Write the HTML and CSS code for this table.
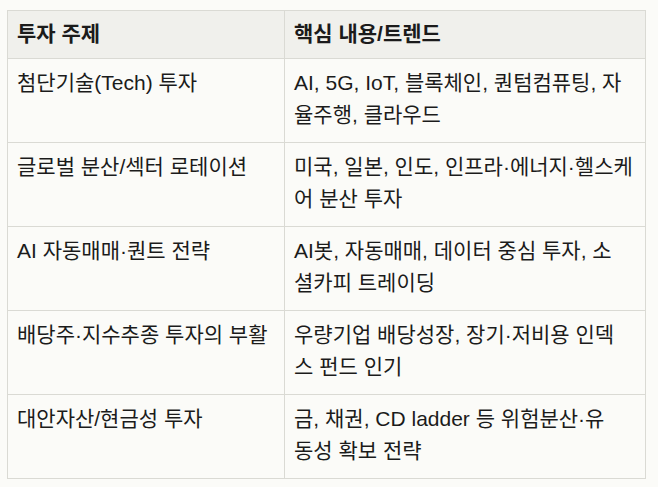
FILE: index.html
```html
<!DOCTYPE html>
<html lang="ko">
<head>
<meta charset="utf-8">
<link rel="stylesheet" href="styles.css">
</head>
<body>
<div class="wrap">
<table class="grid">
  <thead>
    <tr><th class="c1">투자 주제</th><th class="c2">핵심 내용/트렌드</th></tr>
  </thead>
  <tbody>
    <tr><td>첨단기술(Tech) 투자</td><td>AI, 5G, IoT, 블록체인, 퀀텀컴퓨팅, 자<br>율주행, 클라우드</td></tr>
    <tr><td>글로벌 분산/섹터 로테이션</td><td>미국, 일본, 인도, 인프라·에너지·헬스케<br>어 분산 투자</td></tr>
    <tr><td>AI 자동매매·퀀트 전략</td><td>AI봇, 자동매매, 데이터 중심 투자, 소<br>셜카피 트레이딩</td></tr>
    <tr><td>배당주·지수추종 투자의 부활</td><td>우량기업 배당성장, 장기·저비용 인덱<br>스 펀드 인기</td></tr>
    <tr><td>대안자산/현금성 투자</td><td>금, 채권, CD ladder 등 위험분산·유<br>동성 확보 전략</td></tr>
  </tbody>
</table>
</div>
</body>
</html>
```

FILE: styles.css
```css
html, body {
  margin: 0;
  padding: 0;
  background: #fbfbf8;
}
.wrap {
  padding: 10px 0 0 7px;
}
.grid {
  width: 639px;
  border-collapse: collapse;
  table-layout: fixed;
  font-family: "Liberation Sans", "Noto Sans CJK KR", sans-serif;
  font-size: 21px;
  color: #1b1b1b;
  border: 1px solid #dadad4;
}
.grid th, .grid td {
  border: 1px solid #dadad4;
  text-align: left;
  vertical-align: top;
  padding: 8px 9px 11px;
  line-height: 32px;
}
.grid th {
  background: #f0f0ec;
  font-weight: 600;
  padding: 7px 9px 8px;
}
.c1 { width: 258px; }
.c2 { width: auto; }
```
